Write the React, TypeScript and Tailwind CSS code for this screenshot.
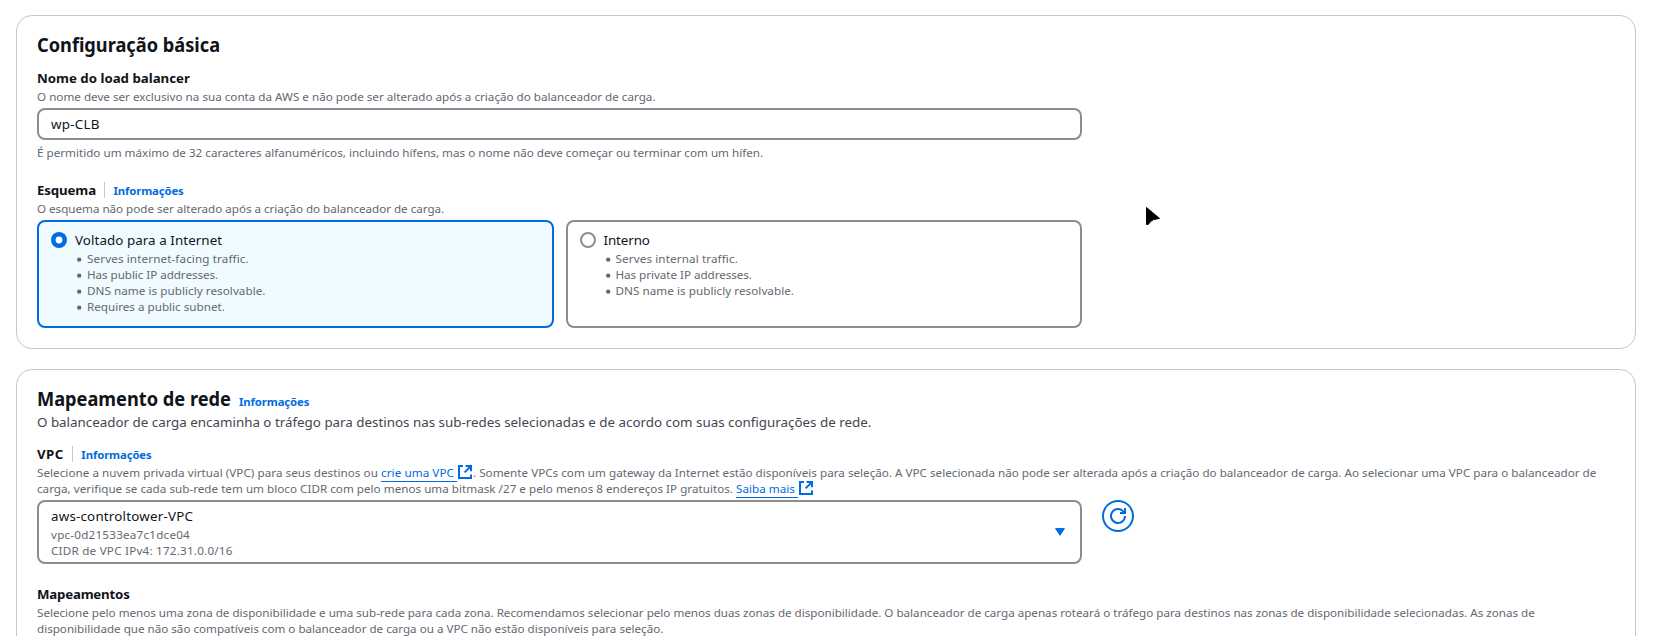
import type { ReactNode } from "react";

function ExternalIcon() {
  return (
    <svg
      width="16"
      height="16"
      viewBox="0 0 16 16"
      fill="none"
      stroke="#006ce0"
      strokeWidth="2"
      className="-mt-px shrink-0"
    >
      <path d="M8.6 2H14v5.2" />
      <path d="m7.6 8.4 6.2-6.2" />
      <path d="M14 10.5V14H2V2h4" />
    </svg>
  );
}

function Info() {
  return <a className="text-[11.3px] leading-5 font-bold tracking-[-0.1px] text-[#006ce0]">Informações</a>;
}

function Heading({ children }: { children: ReactNode }) {
  return <h2 className="h-6 origin-left scale-x-[0.91] text-xl leading-6 font-bold">{children}</h2>;
}

function Label({ children, info }: { children: ReactNode; info?: boolean }) {
  return (
    <div className="flex h-5 items-center text-[13.26px] leading-5 font-bold">
      {children}
      {info && (
        <span className="ml-2 flex h-4 items-center border-l border-[#c6c6cd] pt-0.5 pl-[8.5px]">
          <Info />
        </span>
      )}
    </div>
  );
}

function Link({ children, className }: { children: ReactNode; className: string }) {
  return (
    <>
      <a className={`h-[17px] shrink-0 border-b border-[#006ce0] text-[#006ce0] ${className}`}>{children}</a>
      <ExternalIcon />
    </>
  );
}

function Tile({ title, items, selected }: { title: ReactNode; items: ReactNode[]; selected?: boolean }) {
  return (
    <div
      className={`flex h-[108px] flex-1 gap-2 rounded-lg border-2 px-3 py-2 ${
        selected ? "border-[#006ce0] bg-[#f0fbff]" : "border-[#8c8c94] bg-white"
      }`}
    >
      <svg width="16" height="16" viewBox="0 0 16 16" className="mt-0.5 shrink-0">
        {selected ? (
          <>
            <circle cx="8" cy="8" r="8" fill="#006ce0" />
            <circle cx="8" cy="8" r="3.4" fill="#fff" />
          </>
        ) : (
          <circle cx="8" cy="8" r="7" fill="#fff" stroke="#8c8c94" strokeWidth="2" />
        )}
      </svg>
      <div>
        <div className="text-[13.37px] leading-5">{title}</div>
        <ul className="pt-px text-[11.66px] leading-4 text-[#656871]">
          {items.map((item, i) => (
            <li key={i} className="flex items-center">
              <svg width="12" height="16" viewBox="0 0 12 16" className="shrink-0">
                <circle cx="4.2" cy="8.6" r="2.2" fill="#656871" />
              </svg>
              {item}
            </li>
          ))}
        </ul>
      </div>
    </div>
  );
}

export default function App() {
  return (
    <main className="relative h-[636px] w-[1654px] overflow-hidden bg-white pt-[15px] pl-4 font-['Noto_Sans',sans-serif] whitespace-nowrap text-[#0f141a]">
      <section className="h-[334px] w-[1620px] rounded-2xl border border-[#c6c6cd] px-5 pt-[17px]">
        <Heading>Configuração básica</Heading>
        <div className="mt-[11px]">
          <Label>Nome do load balancer</Label>
          <p className="-mb-px pt-px text-[11.66px] leading-4 text-[#656871]">
            O nome deve ser exclusivo na sua conta da AWS e não pode ser alterado após a criação do balanceador de carga.
          </p>
          <div className="mt-1 flex h-8 w-[1045px] items-center rounded-lg border-2 border-[#8c8c94] px-3 text-[13.37px] leading-5 tracking-[0.25px]">
            wp-CLB
          </div>
          <p className="mt-1 -mb-px pt-px text-[11.66px] leading-4 text-[#656871]">
            É permitido um máximo de 32 caracteres alfanuméricos, incluindo hífens, mas o nome não deve começar ou
            terminar com um hífen.
          </p>
        </div>
        <div className="mt-5">
          <Label info>
            <span className="tracking-[-0.12px]">Esquema</span>
          </Label>
          <p className="-mb-px pt-px text-[11.66px] leading-4 tracking-[-0.03px] text-[#656871]">
            O esquema não pode ser alterado após a criação do balanceador de carga.
          </p>
          <div className="mt-1 flex w-[1045px] gap-3">
            <Tile
              selected
              title={<span className="tracking-[0.07px]">Voltado para a Internet</span>}
              items={[
                <span className="tracking-[0.12px]">Serves internet-facing traffic.</span>,
                <span className="tracking-[-0.06px]">Has public IP addresses.</span>,
                <span className="tracking-[0.05px]">DNS name is publicly resolvable.</span>,
                <span>Requires a public subnet.</span>,
              ]}
            />
            <Tile
              title={<span className="tracking-[-0.1px]">Interno</span>}
              items={[
                <span className="tracking-[0.12px]">Serves internal traffic.</span>,
                <span className="tracking-[-0.045px]">Has private IP addresses.</span>,
                <span className="tracking-[0.05px]">DNS name is publicly resolvable.</span>,
              ]}
            />
          </div>
        </div>
      </section>

      <section className="mt-5 h-[400px] w-[1620px] rounded-2xl border border-[#c6c6cd] px-5 pt-[17px]">
        <div className="flex h-6">
          <div className="w-[202px]">
            <Heading>Mapeamento de rede</Heading>
          </div>
          <div className="pt-px">
            <Info />
          </div>
        </div>
        <p className="mt-px text-[13.36px] leading-5 text-[#424650]">
          O balanceador de carga encaminha o tráfego para destinos nas sub-redes selecionadas e de acordo com suas
          configurações de rede.
        </p>
        <div className="mt-3">
          <Label info>
            <span className="tracking-[0.5px]">VPC</span>
          </Label>
          <div className="-mb-px pt-px text-[11.65px] leading-4 text-[#656871]">
            <div className="flex h-4">
              <span className="w-[344px] shrink-0 tracking-[0.05px]">
                Selecione a nuvem privada virtual (VPC) para seus destinos ou
              </span>
              <Link className="w-[76px] tracking-[0.08px]">crie uma VPC</Link>
              <span className="tracking-[0.015px]">
                . Somente VPCs com um gateway da Internet estão disponíveis para seleção. A VPC selecionada não pode
                ser alterada após a criação do balanceador de carga. Ao selecionar uma VPC para o balanceador de
              </span>
            </div>
            <div className="flex h-4">
              <span className="w-[699px] shrink-0 tracking-[0.02px]">
                carga, verifique se cada sub-rede tem um bloco CIDR com pelo menos uma bitmask /27 e pelo menos 8
                endereços IP gratuitos.
              </span>
              <Link className="w-[62px] tracking-[0.03px]">Saiba mais</Link>
            </div>
          </div>
          <div className="mt-1 flex items-start gap-5">
            <div className="flex h-16 w-[1045px] items-center justify-between rounded-lg border-2 border-[#8c8c94] pr-[15px] pl-3">
              <div className="h-[52px]">
                <div className="text-[13.37px] leading-5 tracking-[0.2px]">aws-controltower-VPC</div>
                <div className="pt-px text-[11.66px] leading-4 tracking-[0.22px] text-[#656871]">
                  <div>vpc-0d21533ea7c1dce04</div>
                  <div>CIDR de VPC IPv4: 172.31.0.0/16</div>
                </div>
              </div>
              <svg width="10" height="8" viewBox="0 0 10 8" fill="#006ce0" stroke="#006ce0" strokeLinejoin="round">
                <path d="M.6.6h8.8L5 7.3z" />
              </svg>
            </div>
            <button className="flex size-8 items-center justify-center rounded-full border-2 border-[#006ce0]">
              <svg width="16" height="16" viewBox="0 0 16 16" fill="none" stroke="#006ce0" strokeWidth="2" className="shrink-0">
                <path d="M10 5h5V0" />
                <path d="M15 8a7 7 0 1 1-1.75-4.63L15 5" />
              </svg>
            </button>
          </div>
        </div>
        <div className="mt-5">
          <Label>
            <span className="tracking-[-0.2px]">Mapeamentos</span>
          </Label>
          <div className="pt-px text-[11.64px] leading-4 text-[#656871]">
            <div>
              Selecione pelo menos uma zona de disponibilidade e uma sub-rede para cada zona. Recomendamos selecionar
              pelo menos duas zonas de disponibilidade. O balanceador de carga apenas roteará o tráfego para destinos
              nas zonas de disponibilidade selecionadas. As zonas de
            </div>
            <div>
              disponibilidade que não são compatíveis com o balanceador de carga ou a VPC não estão disponíveis para
              seleção.
            </div>
          </div>
        </div>
      </section>

      <svg className="absolute top-[206px] left-[1145px]" width="18" height="21" viewBox="0 0 18 21">
        <path
          d="M1.5 1.5 14.5 12.4 8.6 13.6Q5.6 14.8 3.3 18.4L1.5 18.4z"
          fill="#000"
          stroke="#000"
          strokeLinejoin="round"
        />
      </svg>
    </main>
  );
}
